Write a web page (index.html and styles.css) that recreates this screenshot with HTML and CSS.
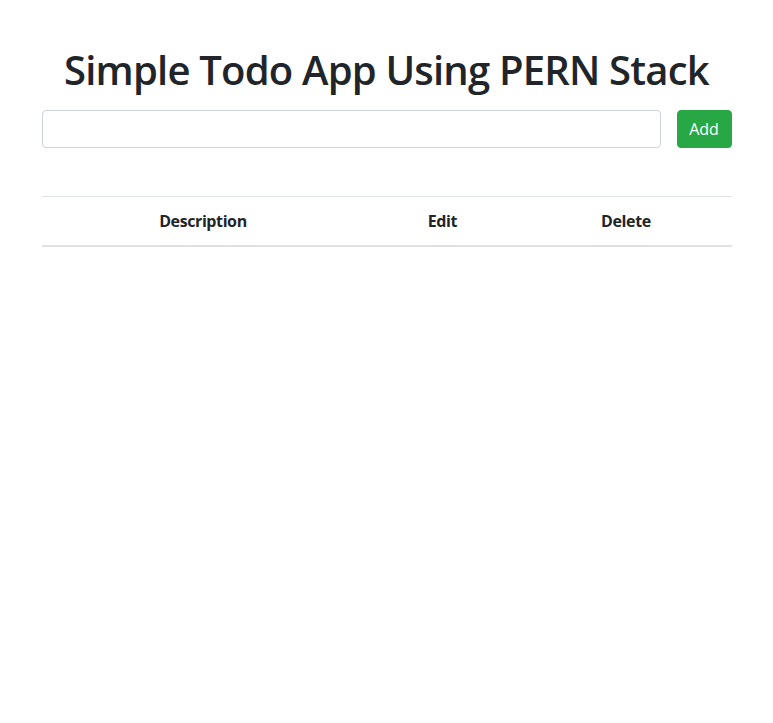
FILE: index.html
```html
<!DOCTYPE html>
<html lang="en">
<head>
<meta charset="utf-8">
<title>PERN Todo</title>
<link rel="stylesheet" href="styles.css">
</head>
<body>
<div class="container">
  <h1 class="title">Simple Todo App Using PERN Stack</h1>
  <form class="todo-form">
    <input class="todo-input" type="text">
    <button class="btn-add" type="button">Add</button>
  </form>
  <table class="todo-table">
    <colgroup>
      <col class="col-desc">
      <col class="col-edit">
      <col class="col-delete">
    </colgroup>
    <thead>
      <tr>
        <th>Description</th>
        <th>Edit</th>
        <th>Delete</th>
      </tr>
    </thead>
    <tbody></tbody>
  </table>
</div>
</body>
</html>
```
FILE: styles.css
```css
* { box-sizing: border-box; }
html, body {
  margin: 0;
  background: #fff;
}
body {
  font-family: "Open Sans", "Noto Sans", "Liberation Sans", sans-serif;
  font-size: 16px;
  line-height: 1.5;
  color: #212529;
}
.container {
  width: 720px;
  margin: 0 auto;
  padding: 0 15px;
}
.title {
  margin: 46px 0 0;
  font-size: 40px;
  font-weight: 600;
  letter-spacing: -0.8px;
  line-height: 48px;
  text-align: center;
}
.todo-form {
  display: flex;
  gap: 16px;
  margin-top: 16px;
}
.todo-input {
  flex: 1;
  height: 38px;
  border: 1px solid #ced4da;
  border-radius: 4px;
  padding: 6px 12px;
  font: inherit;
}
.btn-add {
  height: 38px;
  width: 55px;
  border: 1px solid #28a745;
  background: #28a745;
  color: #fff;
  border-radius: 4px;
  font: inherit;
  padding: 0;
}
.todo-table {
  width: 100%;
  margin-top: 48px;
  border-collapse: collapse;
  table-layout: fixed;
}
.col-desc { width: 46.8%; }
.col-edit { width: 22.6%; }
.col-delete { width: 30.6%; }
.todo-table th {
  padding: 12px;
  font-weight: 700;
  letter-spacing: -0.4px;
  text-align: center;
  border-top: 1px solid #dee2e6;
  border-bottom: 2px solid #dee2e6;
  line-height: 24px;
}
```
